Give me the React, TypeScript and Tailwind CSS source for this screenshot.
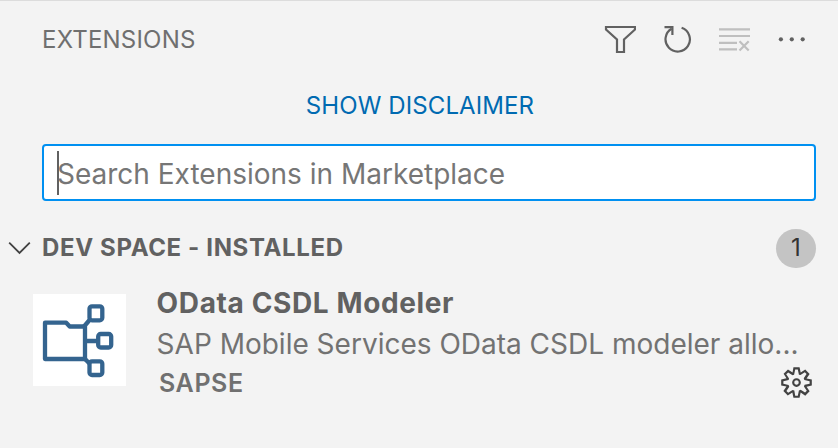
import React from "react";
import { VscGear } from "react-icons/vsc";

function FilterIcon() {
  return (
    <svg width="32" height="30" viewBox="604 24 32 30" fill="none" stroke="#616161" strokeWidth="2.2">
      <path d="M606 27H635V29.5L624 39.5V52H617V39.5L606 29.5Z" />
    </svg>
  );
}

function RefreshIcon() {
  return (
    <svg width="30" height="30" viewBox="662 24 30 30" fill="none" stroke="#616161" strokeWidth="2.2">
      <path d="M681.6 27.8A12.2 12.2 0 1 1 671.6 28.8" />
      <path d="M664.5 27.2H672.4V35" />
    </svg>
  );
}

function ClearIcon() {
  return (
    <svg width="32" height="30" viewBox="719 24 32 30" fill="none" stroke="#bfbfbf" strokeWidth="2.2">
      <path d="M719 29.3H750M719 36H750M719 42.8H737M719 49.3H737M739.5 41.3L748.7 50.5M748.7 41.3L739.5 50.5" />
    </svg>
  );
}

function MoreIcon() {
  return (
    <svg width="30" height="30" viewBox="777 24 30 30" fill="#616161">
      <circle cx="780.9" cy="39.3" r="2.1" />
      <circle cx="791.8" cy="39.3" r="2.1" />
      <circle cx="802.7" cy="39.3" r="2.1" />
    </svg>
  );
}

function ModelerLogo() {
  return (
    <svg width="93" height="92" viewBox="33 294 93 92" fill="none" stroke="#34648f" strokeWidth="4.3" strokeLinejoin="round" className="shrink-0 bg-white">
      <path d="M45 322.7H66.2L69.7 326.5H85V359H45Z" />
      <path d="M84 326.5L90 319.5M85 341H98M84 358L90 364" />
      <rect x="89.5" y="306.3" width="12.8" height="14" rx="2.5" />
      <rect x="98.2" y="334" width="13" height="13.5" rx="2.5" />
      <rect x="89.5" y="361.3" width="12.8" height="13.7" rx="2.5" />
    </svg>
  );
}

export default function App() {
  return (
    <main className="flex h-[448px] w-[838px] flex-col overflow-hidden border-t border-[#dcdcdc] bg-[#f3f3f3] font-['Inter',sans-serif] text-[#616161]">
      <header className="flex h-[77px] items-center justify-between pl-[42px] pr-[31px]">
        <h1 className="text-[24px] leading-[30px] tracking-[0.2px] text-[#6f6f6f]">EXTENSIONS</h1>
        <div className="flex items-center pb-[2px]">
          <FilterIcon />
          <span className="w-[26px]" />
          <RefreshIcon />
          <span className="w-[27px]" />
          <ClearIcon />
          <span className="w-[26px]" />
          <MoreIcon />
        </div>
      </header>
      <div className="flex h-[66px] justify-center pl-[2px] pt-[13px]">
        <a className="text-[24px] leading-[30px] tracking-[0.1px] text-[#006ab1]">SHOW DISCLAIMER</a>
      </div>
      <div className="ml-[42px] flex h-[57px] w-[774px] shrink-0 items-center rounded-[4px] border-2 border-[#0090f1] bg-white pl-[13px]">
        <span className="h-[44px] w-[2px] bg-[#616161]" />
        <span className="-ml-[2px] mt-[2px] whitespace-nowrap text-[28px] leading-[36px] text-[#767676]">Search Extensions in Marketplace</span>
      </div>
      <section className="mt-[26px] flex h-[42px] items-center pl-[8px] pr-[22px]">
        <svg width="24" height="16" viewBox="8 240 24 16" fill="none" stroke="#424242" strokeWidth="1.8">
          <path d="M9.2 242.7L19.5 253L29.8 242.7" />
        </svg>
        <h2 className="ml-[10px] text-[24px] font-bold leading-[30px] tracking-[0.64px]">DEV SPACE - INSTALLED</h2>
        <span className="ml-auto mt-px flex h-[39px] w-[40px] items-center justify-center rounded-full bg-[#c4c4c4] pb-px text-[24px] text-[#333333]">1</span>
      </section>
      <article className="mt-[15px] flex pl-[33px]">
        <div className="mt-[10px]"><ModelerLogo /></div>
        <div className="ml-[30.6px] w-[657px]">
          <h3 className="text-[28px] font-bold leading-[38px] tracking-[0.62px]">OData CSDL Modeler</h3>
          <p className="mt-[3px] whitespace-nowrap text-[28px] leading-[38px] text-[#727272]">SAP Mobile Services OData CSDL modeler allo...</p>
          <div className="flex h-[40px] items-center justify-between pl-[2.4px]">
            <span className="text-[25px] font-semibold leading-[38px] tracking-[0.6px] text-[#707070]">SAPSE</span>
            <VscGear size={35} color="#424242" strokeWidth={0} className="-mt-[2px]" />
          </div>
        </div>
      </article>
    </main>
  );
}
